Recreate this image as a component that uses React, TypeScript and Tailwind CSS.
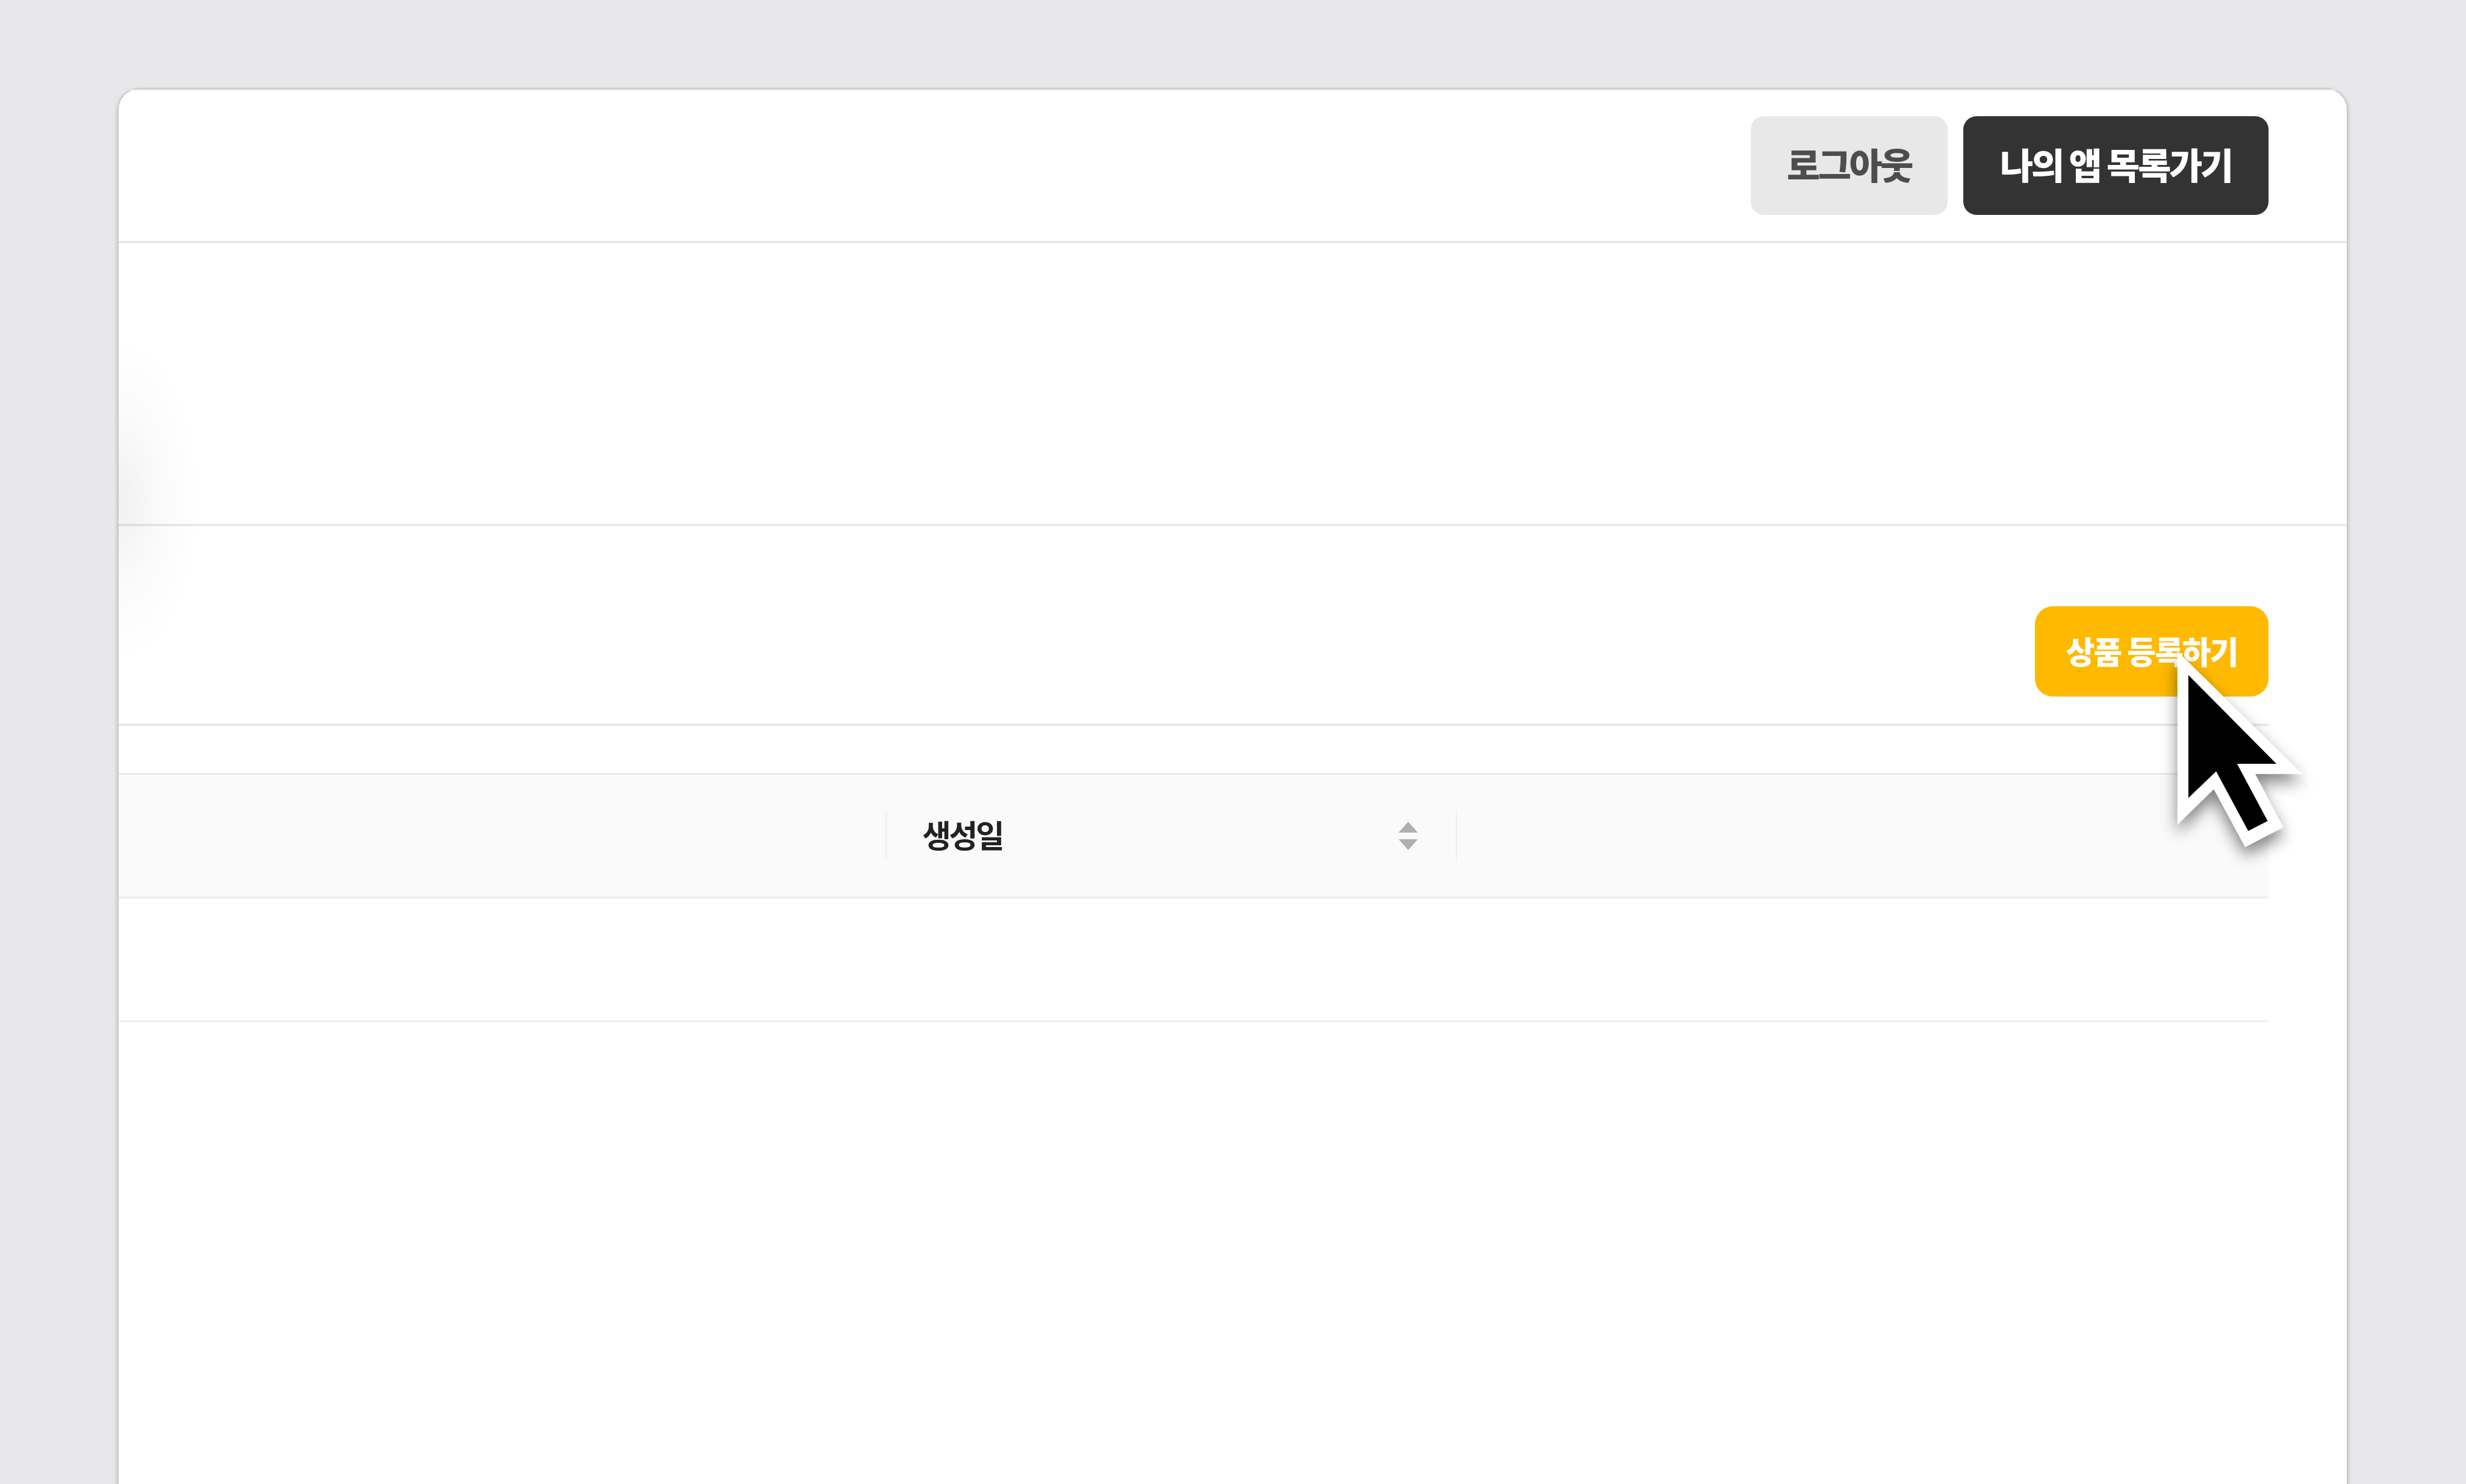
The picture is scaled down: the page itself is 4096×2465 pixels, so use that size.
const font = 'font-["Noto_Sans_CJK_KR","Noto_Sans",sans-serif]';

function SortIcon() {
  return (
    <svg viewBox="0 0 32 47" className="h-[47px] w-[32px]">
      <polygon points="16,0 32,18 0,18" fill="#b0b0b0" />
      <polygon points="0,29 32,29 16,47" fill="#b0b0b0" />
    </svg>
  );
}

function Cursor() {
  return (
    <svg
      viewBox="5500 1620 480 620"
      className="pointer-events-none absolute left-[3380px] top-[907px] h-[403px] w-[312px] drop-shadow-[0_14px_13px_rgba(0,0,0,0.48)]"
    >
      <polygon
        points="5561,1661 5880.5,1975 5760,1975 5832,2111 5734,2162 5654,2014 5561,2105"
        fill="#ffffff"
      />
      <polygon
        points="5589,1722 5814,1949 5713.5,1949 5791.6,2095 5742,2120.5 5660,1968 5589,2036"
        fill="#000000"
      />
    </svg>
  );
}

export default function App() {
  return (
    <div className={`h-[2465px] overflow-hidden bg-[#e8e8ea] pt-[146px] pl-[195px] ${font}`}>
      <div className="relative h-[2500px] w-[3705px] rounded-t-[36px] border-2 border-[#c9c9c9] bg-white shadow-[0_3px_7px_rgba(0,0,0,0.2)]">
        <div className="h-[2px] bg-[#f6e0e8]" />

        <header className="flex h-[254px] items-center justify-end gap-[26px] border-b-4 border-[#e8e8e8] pr-[130px]">
          <button className="h-[164px] w-[327px] rounded-[22px] bg-[#e8e8e8] pb-[7px] text-[60px] font-black tracking-[-3.5px] text-[#4d4d4d]">
            로그아웃
          </button>
          <button className="h-[164px] w-[507px] rounded-[22px] bg-[#333333] pb-[7px] text-[60px] font-black tracking-[-3.2px] text-white">
            나의 앱 목록가기
          </button>
        </header>

        <section className="h-[470px] border-b-4 border-[#e8e8e8]" />

        <main className="pr-[130px]">
          <div className="flex h-[332px] justify-end border-b-4 border-[#e8e8e8] pt-[133px]">
            <button className="h-[150px] w-[388px] rounded-[30px] bg-[#ffb900] pb-[3px] text-[52px] font-black tracking-[-2px] text-white">
              상품 등록하기
            </button>
          </div>

          <div className="mt-[78px] flex h-[209px] items-center border-y-[3px] border-t-[#e8e8e8] border-b-[#f0f0f0] bg-[#fafafa] border-b-4">
            <div className="w-[1274px]" />
            <div className="flex h-[85px] w-[947px] items-center justify-between border-l-2 border-[#f0f0f0] pr-[63px] pl-[59px]">
              <span className="pb-[4px] text-[52px] font-bold tracking-[-3.5px] text-[#222222]">생성일</span>
              <SortIcon />
            </div>
            <div className="h-[85px] border-l-2 border-[#f0f0f0]" />
          </div>

          <div className="h-[205px] border-b-[3px] border-[#f0f0f0]" />
        </main>

        <div className="pointer-events-none absolute left-0 top-[411px] h-[540px] w-[135px] bg-[radial-gradient(ellipse_100%_50%_at_0%_50%,rgba(0,0,0,0.06),rgba(0,0,0,0.02)_50%,transparent)]" />
        <Cursor />
      </div>
    </div>
  );
}
